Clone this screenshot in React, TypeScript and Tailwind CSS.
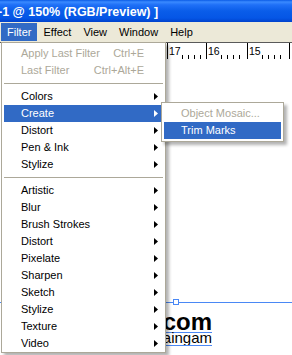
import React from "react";

type Item =
  | { sep: true }
  | { label: string; shortcut?: string; sub?: boolean; disabled?: boolean; active?: boolean; sep?: false };

const mainItems: Item[] = [
  { label: "Apply Last Filter", shortcut: "Ctrl+E", disabled: true },
  { label: "Last Filter", shortcut: "Ctrl+Alt+E", disabled: true },
  { sep: true },
  { label: "Colors", sub: true },
  { label: "Create", sub: true, active: true },
  { label: "Distort", sub: true },
  { label: "Pen & Ink", sub: true },
  { label: "Stylize", sub: true },
  { sep: true },
  { label: "Artistic", sub: true },
  { label: "Blur", sub: true },
  { label: "Brush Strokes", sub: true },
  { label: "Distort", sub: true },
  { label: "Pixelate", sub: true },
  { label: "Sharpen", sub: true },
  { label: "Sketch", sub: true },
  { label: "Stylize", sub: true },
  { label: "Texture", sub: true },
  { label: "Video", sub: true },
];

function Arrow({ white }: { white?: boolean }) {
  return (
    <svg width="4" height="7" viewBox="0 0 4 7" className="block">
      <polygon points="0,0 4,3.5 0,7" fill={white ? "#ffffff" : "#000000"} />
    </svg>
  );
}

function Row({ item }: { item: Item }) {
  if ("sep" in item && item.sep) {
    return (
      <div className="h-[9px] pt-[4px]">
        <div className="h-px bg-[#aca899]" />
      </div>
    );
  }
  const it = item as Exclude<Item, { sep: true }>;
  const color = it.active ? "bg-[#316ac5] text-white" : it.disabled ? "text-[#aca899]" : "text-black";
  return (
    <div className={`h-[17px] flex items-center pl-[17px] pr-[5px] whitespace-nowrap ${color}`}>
      <span className="flex-1">{it.label}</span>
      {it.shortcut ? <span className="mr-[10px]">{it.shortcut}</span> : null}
      <span className="w-[4px] flex items-center">{it.sub ? <Arrow white={it.active} /> : null}</span>
    </div>
  );
}

function Ruler() {
  const majors = [
    { x: 167, n: "17" },
    { x: 206, n: "16" },
    { x: 247, n: "15" },
    { x: 289, n: "" },
  ];
  const minors: number[] = [];
  [126, 167, 206, 247].forEach((m) => {
    [15, 21, 27, 33].forEach((d) => minors.push(m + d));
  });
  return (
    <svg width="292" height="18" viewBox="0 0 292 18" className="block">
      <rect x="0" y="0" width="292" height="18" fill="#ffffff" />
      <rect x="0" y="0" width="292" height="1" fill="#5a5a5a" />
      {majors.map((m) => (
        <g key={m.x}>
          <rect x={m.x} y="1" width="1" height="16" fill="#000" />
          {m.n ? (
            <text
              x={m.x + 2}
              y="12.5"
              fontSize="10.5"
              fontFamily="'Liberation Sans', Arial, sans-serif"
              fill="#000"
            >
              {m.n}
            </text>
          ) : null}
        </g>
      ))}
      {minors.map((x) => (
        <rect key={x} x={x} y="13" width="1" height="4" fill="#000" />
      ))}
    </svg>
  );
}

export default function App() {
  return (
    <div className="relative w-[292px] h-[355px] overflow-hidden bg-white font-['Liberation_Sans',Arial,sans-serif]">
      {/* Title bar */}
      <div className="h-[22px] bg-[linear-gradient(180deg,#0b5ce6_0%,#3a8aff_9%,#1f70f7_22%,#0a5de9_50%,#0556e6_82%,#0042cc_100%)] flex items-center pt-[2px] pl-px text-white font-bold text-[12.5px] leading-none whitespace-nowrap">
        <span className="ml-[-3px]">-1 @ 150% (RGB/Preview) ]</span>
      </div>

      {/* Menu bar */}
      <div className="h-[20px] bg-[#ece9d8] flex items-stretch pl-px text-[11px] leading-none">
        {["Filter", "Effect", "View", "Window", "Help"].map((m, i) => (
          <div
            key={m}
            className={
              i === 0
                ? "bg-[#316ac5] text-white flex items-center px-[6px] my-px"
                : "text-black flex items-center px-[6px]"
            }
          >
            {m}
          </div>
        ))}
      </div>

      {/* Canvas */}
      <div className="relative h-[313px] bg-white">
        <Ruler />
        {/* guide line */}
        <div className="absolute left-0 right-0 top-[260px] h-px bg-[#4a88f5]" />
        <div className="absolute left-[173px] top-[257px] w-[6px] h-[6px] border border-[#4a88f5] bg-white" />
        {/* artwork text */}
        <div className="absolute right-[80px] top-[272px] text-[24px] font-bold leading-[16px] text-black whitespace-nowrap">
          .com
        </div>
        <div className="absolute left-[150px] w-[62px] top-[290px] h-px bg-[#4a88f5]" />
        <div className="absolute right-[80px] top-[289px] text-[15px] leading-[13px] text-black whitespace-nowrap">
          raingam
        </div>
        <div className="absolute left-[150px] w-[62px] top-[303px] h-px bg-[#4a88f5]" />
      </div>

      {/* Filter menu */}
      <div className="absolute left-px top-[42px] w-[165px] border border-[#aca899] bg-white pt-[2px] px-[2px] text-[11px] leading-none shadow-[3px_3px_3px_rgba(0,0,0,0.3)]">
        {mainItems.map((it, i) => (
          <Row key={i} item={it} />
        ))}
      </div>

      {/* Create submenu */}
      <div className="absolute left-[161px] top-[102px] w-[123px] border border-[#aca899] bg-white p-[2px] text-[11px] leading-none shadow-[3px_3px_3px_rgba(0,0,0,0.3)]">
        <Row item={{ label: "Object Mosaic...", disabled: true }} />
        <Row item={{ label: "Trim Marks", active: true }} />
      </div>
    </div>
  );
}
